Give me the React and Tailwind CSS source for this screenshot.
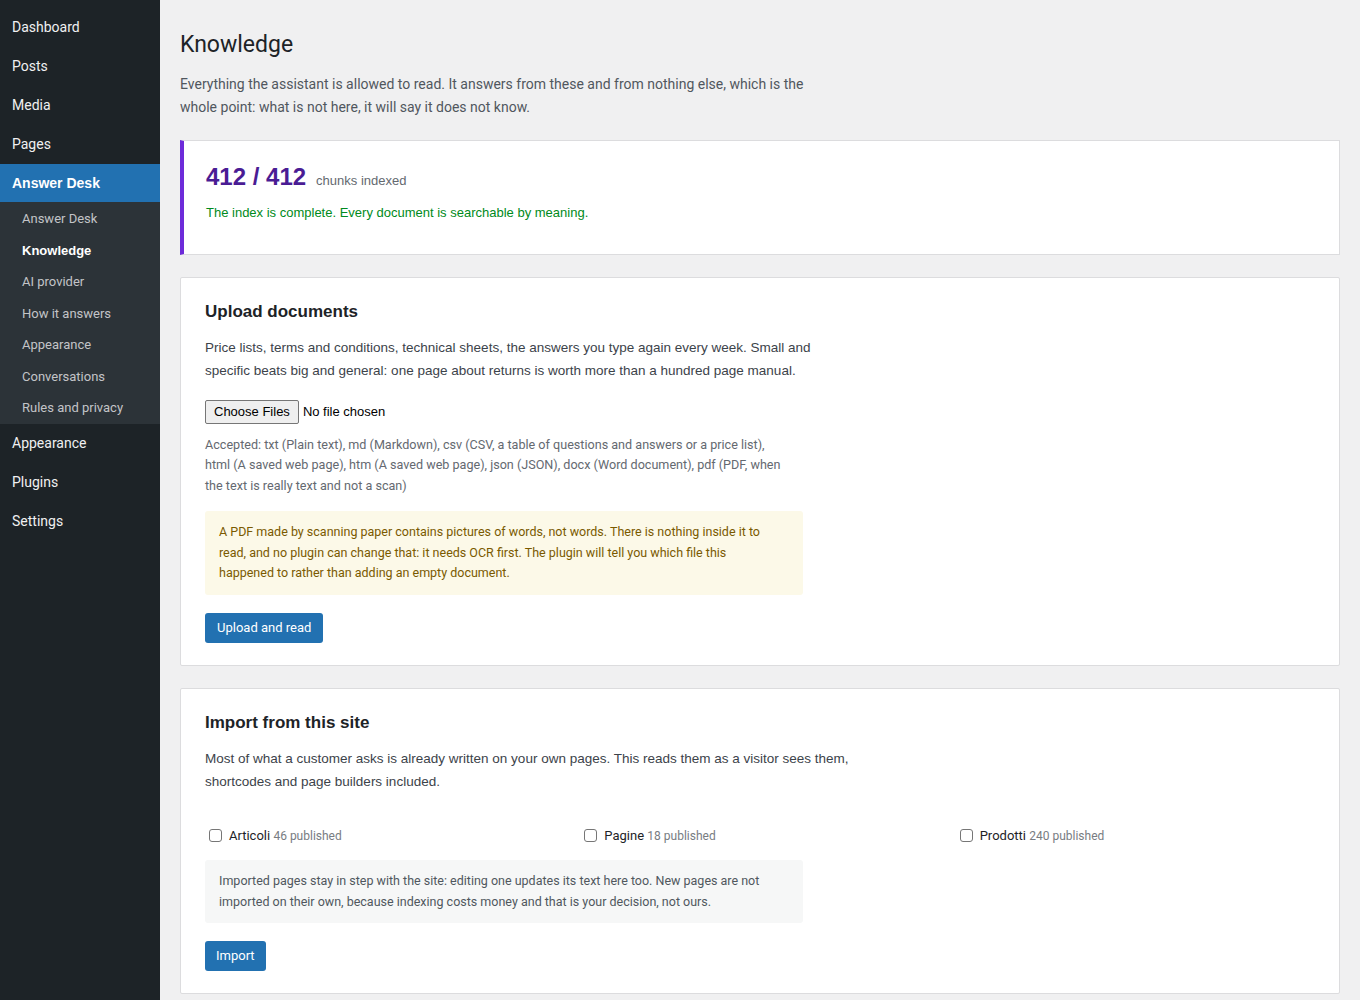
import React from "react";

const roboto = "font-['Roboto',sans-serif]";
const arial = "font-['Liberation_Sans',Arial,sans-serif]";

const topMenu = ["Dashboard", "Posts", "Media", "Pages"];
const subMenu = [
  "Answer Desk",
  "Knowledge",
  "AI provider",
  "How it answers",
  "Appearance",
  "Conversations",
  "Rules and privacy",
];
const bottomMenu = ["Appearance", "Plugins", "Settings"];

const Sidebar = () => {
  return (
    <div className="w-[160px] shrink-0 bg-[#1d2327] pt-[8px]">
      {topMenu.map((m) => (
        <div key={m} className="h-[39px] flex items-center px-3 text-[14px] text-[#f0f0f1]">
          {m}
        </div>
      ))}
      <div className={`h-[38px] flex items-center px-3 text-[14px] font-bold text-white bg-[#2271b1] ${arial}`}>
        Answer Desk
      </div>
      <div className="bg-[#2c3338] pt-[1px]">
        {subMenu.map((s) => (
          <div
            key={s}
            className={
              s === "Knowledge"
                ? `h-[31.5px] flex items-center pl-[22px] text-[13px] font-bold text-white ${arial}`
                : "h-[31.5px] flex items-center pl-[22px] text-[13px] text-[#c3c4c7]"
            }
          >
            {s}
          </div>
        ))}
      </div>
      {bottomMenu.map((m) => (
        <div key={m} className="h-[39px] flex items-center px-3 text-[14px] text-[#f0f0f1]">
          {m}
        </div>
      ))}
    </div>
  );
};

const Checkbox = ({ label, count }) => (
  <label className="flex items-center gap-[7px] pl-1">
    <span className="w-[13px] h-[13px] rounded-[3px] border border-[#767676] bg-white"></span>
    <span className={`text-[13px] text-[#1d2327] ${roboto}`}>
      {label} <span className="text-[12px] text-[#787c82]">{count} published</span>
    </span>
  </label>
);

const App = () => {
  return (
    <div className={`flex min-h-[1000px] bg-[#f0f0f1] ${roboto}`}>
      <Sidebar />
      <div className="flex-1 pl-5 pr-5 pt-[30px] pb-[6px]">
        <h1 className="text-[23px] text-[#1d2327] leading-[29px]">Knowledge</h1>
        <p className="mt-[14px] max-w-[650px] text-[14px] leading-[23px] text-[#50575e]">
          Everything the assistant is allowed to read. It answers from these and from nothing else,
          which is the whole point: what is not here, it will say it does not know.
        </p>

        <div className="mt-[21px] bg-white border border-[#dcdcde] border-l-4 border-l-[#6d2bd9] h-[115px] pl-[22px] pt-[18px]">
          <div className="flex items-baseline gap-[10px]">
            <span className={`text-[24px] font-bold text-[#4a1c94] ${arial}`}>412 / 412</span>
            <span className={`text-[13px] text-[#646970] ${arial}`}>chunks indexed</span>
          </div>
          <p className={`mt-[8px] text-[13px] text-[#008a20] ${arial}`}>
            The index is complete. Every document is searchable by meaning.
          </p>
        </div>

        <div className="mt-[22px] bg-white border border-[#dcdcde] rounded-[2px] px-6 pt-[22px] pb-[22px]">
          <h2 className={`text-[17px] font-bold text-[#1d2327] leading-[24px] ${arial}`}>Upload documents</h2>
          <p className={`mt-[12px] max-w-[620px] text-[13.5px] leading-[23px] text-[#3c434a] ${arial}`}>
            Price lists, terms and conditions, technical sheets, the answers you type again every
            week. Small and specific beats big and general: one page about returns is worth more than
            a hundred page manual.
          </p>
          <div className={`mt-[18px] flex items-center gap-1 text-[13px] text-black ${arial}`}>
            <span className="border border-[#767676] bg-[#efefef] rounded-[2px] px-[8px] py-[1px]">Choose Files</span>
            <span>No file chosen</span>
          </div>
          <p className="mt-[11px] max-w-[583px] text-[12.6px] leading-[20.5px] text-[#646970]">
            Accepted: txt (Plain text), md (Markdown), csv (CSV, a table of questions and answers or a
            price list), html (A saved web page), htm (A saved web page), json (JSON), docx (Word
            document), pdf (PDF, when the text is really text and not a scan)
          </p>
          <div className="mt-[15px] w-[598px] bg-[#fcf9e8] rounded-[3px] pl-[14px] pr-[36px] py-[11px] text-[12.5px] leading-[20.5px] text-[#7a5a00]">
            A PDF made by scanning paper contains pictures of words, not words. There is nothing
            inside it to read, and no plugin can change that: it needs OCR first. The plugin will tell
            you which file this happened to rather than adding an empty document.
          </div>
          <button className="mt-[18px] h-[30px] px-[12px] bg-[#2271b1] rounded-[3px] text-[13px] text-white">
            Upload and read
          </button>
        </div>

        <div className="mt-[22px] bg-white border border-[#dcdcde] rounded-[2px] px-6 pt-[22px] pb-[22px]">
          <h2 className={`text-[17px] font-bold text-[#1d2327] leading-[24px] ${arial}`}>Import from this site</h2>
          <p className={`mt-[12px] max-w-[660px] text-[13.5px] leading-[23px] text-[#3c434a] ${arial}`}>
            Most of what a customer asks is already written on your own pages. This reads them as a
            visitor sees them, shortcodes and page builders included.
          </p>
          <div className="mt-[33px] grid grid-cols-3 gap-4">
            <Checkbox label="Articoli" count={46} />
            <Checkbox label="Pagine" count={18} />
            <Checkbox label="Prodotti" count={240} />
          </div>
          <div className="mt-[15px] w-[598px] bg-[#f6f7f7] rounded-[3px] px-[14px] py-[11px] text-[12.5px] leading-[20.5px] text-[#50575e]">
            Imported pages stay in step with the site: editing one updates its text here too. New
            pages are not imported on their own, because indexing costs money and that is your
            decision, not ours.
          </div>
          <button className="mt-[18px] h-[30px] px-[11px] bg-[#2271b1] rounded-[3px] text-[13px] text-white">
            Import
          </button>
        </div>
      </div>
    </div>
  );
};

export default App;
